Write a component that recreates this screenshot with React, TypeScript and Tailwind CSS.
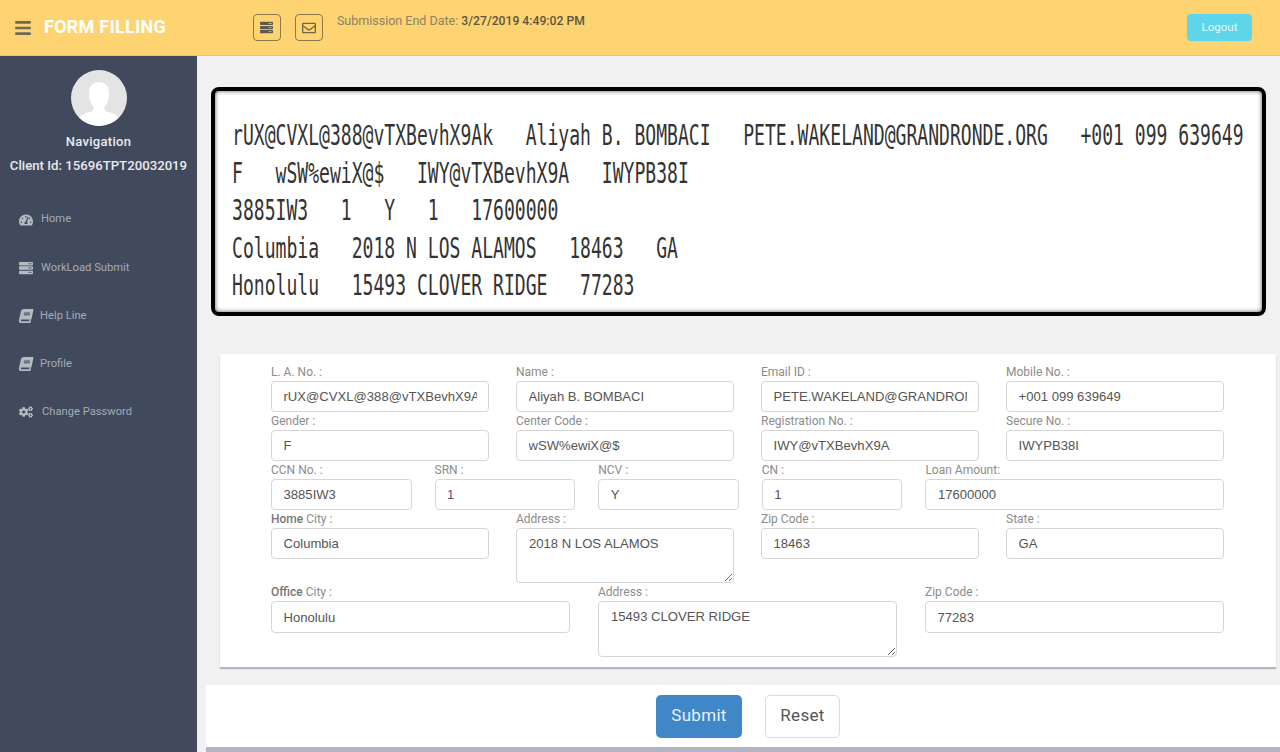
import type { ReactNode } from "react";
import { FaBars, FaBook, FaCogs, FaRegEnvelope, FaServer, FaTachometerAlt } from "react-icons/fa";

const nav = [
  { label: "Home", icon: <FaTachometerAlt />, gap: "gap-2", cls: "h-[49px]" },
  { label: "WorkLoad Submit", icon: <FaServer />, gap: "gap-2", cls: "h-[48px]" },
  { label: "Help Line", icon: <FaBook className="-skew-x-12" />, gap: "gap-[7px]", cls: "h-[48px]" },
  { label: "Profile", icon: <FaBook className="-skew-x-12" />, gap: "gap-[7px]", cls: "h-[48px]" },
  { label: "Change Password", icon: <FaCogs />, gap: "gap-[9px]", cls: "h-[48px]" },
];

const captcha = [
  "rUX@CVXL@388@vTXBevhX9Ak   Aliyah B. BOMBACI   PETE.WAKELAND@GRANDRONDE.ORG   +001 099 639649",
  "F   wSW%ewiX@$   IWY@vTXBevhX9A   IWYPB38I",
  "3885IW3   1   Y   1   17600000",
  "Columbia   2018 N LOS ALAMOS   18463   GA",
  "Honolulu   15493 CLOVER RIDGE   77283",
];

function Label({ children }: { children: ReactNode }) {
  return <label className="block h-[18px] text-[12px] leading-[18px] text-[#8c8c8c] whitespace-nowrap">{children}</label>;
}

function Field({ label, value, className = "", h = "h-[31px]" }: { label: ReactNode; value: string; className?: string; h?: string }) {
  return (
    <div className={className}>
      <Label>{label}</Label>
      <input
        readOnly
        value={value}
        className={`block w-full ${h} rounded-[4px] border border-[#d6d6d6] bg-white px-[11.5px] font-["Liberation_Sans",sans-serif] text-[13.1px] text-[#555] outline-none`}
      />
    </div>
  );
}

function Area({ label, value, h, className = "" }: { label: ReactNode; value: string; h: string; className?: string }) {
  return (
    <div className={className}>
      <Label>{label}</Label>
      <textarea
        readOnly
        value={value}
        className={`block w-full ${h} rounded-[4px] border border-[#d6d6d6] bg-white px-3 py-[7px] font-["Liberation_Sans",sans-serif] text-[13.1px] leading-[16px] text-[#555] outline-none`}
      />
    </div>
  );
}

export default function App() {
  return (
    <div className={`flex h-[752px] w-[1280px] flex-col overflow-hidden bg-[#f1f1f1] font-["Roboto",sans-serif]`}>
      <header className="flex h-[56px] shrink-0 items-start border-b border-[#e6c57f] bg-[#fed472]">
        <FaBars className="ml-[14px] mt-[19px] text-[18px] text-[#6f6a58]" />
        <span className="ml-[12px] mt-[15px] text-[18px] font-bold leading-[24px] tracking-[0.25px] text-white">FORM FILLING</span>
        <button className="ml-[87px] mt-[14px] flex h-[27px] w-[28px] items-center justify-center rounded-[4px] border border-[#8b7a48] text-[13px] text-[#5d5a4c]">
          <FaServer />
        </button>
        <button className="ml-[14px] mt-[14px] flex h-[27px] w-[28px] items-center justify-center rounded-[4px] border border-[#8b7a48] text-[14px] text-[#6d6649]">
          <FaRegEnvelope />
        </button>
        <p className="ml-[14px] mt-[13px] text-[12.5px] leading-[16px] text-[#8b8165]">
          Submission End Date: <span className="text-[12.2px] font-medium text-[#5c5543]">3/27/2019 4:49:02 PM</span>
        </p>
        <button className="ml-auto mr-[28px] mt-[14px] h-[27px] w-[65px] rounded-[4px] bg-[#5ed6ea] text-[11.5px] text-[#e6f8fb]">Logout</button>
      </header>

      <div className="flex min-h-0 flex-1">
        <aside className="flex w-[197px] shrink-0 flex-col items-center bg-[#414a5c] pt-[14px]">
          <svg viewBox="0 0 56 56" className="h-[56px] w-[56px] rounded-full bg-[#e4e4e4]">
            <path d="M5 56c1-10 6-12 14-14 4-1 4-4 3-6-3-3-4-8-4-13 0-7 4-11 10-11s10 4 10 11c0 5-1 10-4 13-1 2-1 5 3 6 8 2 13 4 14 14z" fill="#fff" />
          </svg>
          <p className="mt-[8px] text-[13px] font-medium leading-[16px] tracking-[0.3px] text-[#e8eaee]">Navigation</p>
          <p className="mt-[8px] whitespace-nowrap text-[13.2px] font-medium leading-[16px] text-[#e8eaee]">Client Id: 15696TPT20032019</p>
          <nav className="mt-[21px] w-full">
            {nav.map((item) => (
              <a key={item.label} className={`flex ${item.cls} items-center ${item.gap} pl-[18px] text-[11.2px] text-[#a4abb7]`}>
                <span className="flex w-[15px] justify-center text-[14px] text-[#b4b9c2]">{item.icon}</span>
                {item.label}
              </a>
            ))}
          </nav>
        </aside>

        <main className="min-w-0 flex-1">
          <section className="ml-[14px] mr-[14px] mt-[31px] h-[229px] overflow-hidden rounded-[8px] border-[4px] border-black bg-white pl-[17px] pt-[26px] shadow-[inset_0_0_4px_#555] font-['DejaVu_Sans_Mono',monospace] text-[#333]">
            {captcha.map((line) => (
              <div key={line} className="h-[37.5px] origin-left scale-x-[0.623] whitespace-pre text-[29px] leading-[37.5px]">
                {line}
              </div>
            ))}
          </section>

          <section className="ml-[23px] mr-[4px] mt-[38px] h-[313px] bg-white pl-[51px] pr-[52px] pt-[9px] shadow-[0_2px_1px_#b2b4c4]">
            <div className="grid grid-cols-4 gap-x-[27px]">
              <Field label="L. A. No. :" value="rUX@CVXL@388@vTXBevhX9Ak" />
              <Field label="Name :" value="Aliyah B. BOMBACI" />
              <Field label="Email ID :" value="PETE.WAKELAND@GRANDRONDE.ORG" />
              <Field label="Mobile No. :" value="+001 099 639649" />
              <Field label="Gender :" value="F" />
              <Field label="Center Code :" value="wSW%ewiX@$" />
              <Field label="Registration No. :" value="IWY@vTXBevhX9A" />
              <Field label="Secure No. :" value="IWYPB38I" />
            </div>
            <div className="flex gap-x-[23px]">
              <Field className="w-[140.6px]" label="CCN No. :" value="3885IW3" />
              <Field className="w-[140.6px]" label="SRN :" value="1" />
              <Field className="w-[140.6px]" label="NCV :" value="Y" />
              <Field className="w-[140.6px]" label="CN :" value="1" />
              <Field className="flex-1" label="Loan Amount:" value="17600000" />
            </div>
            <div className="grid grid-cols-4 gap-x-[27px]">
              <Field label={<><b className="font-medium text-[#777]">Home</b> City :</>} value="Columbia" />
              <Area label="Address :" value="2018 N LOS ALAMOS" h="h-[55px]" />
              <Field label="Zip Code :" value="18463" />
              <Field label="State :" value="GA" />
            </div>
            <div className="grid grid-cols-3 gap-x-[28px]">
              <Field h="h-[32px]" label={<><b className="font-medium text-[#777]">Office</b> City :</>} value="Honolulu" />
              <Area label="Address :" value="15493 CLOVER RIDGE" h="h-[56px]" />
              <Field h="h-[32px]" label="Zip Code :" value="77283" />
            </div>
          </section>

          <div className="ml-[9px] mt-[18px] flex h-[67px] items-start justify-center gap-[23px] border-b-[5px] border-[#b2b4c4] bg-white pl-[10px] pt-[10px]">
            <button className="h-[43px] w-[86px] rounded-[5px] bg-[#3f87c6] pb-[2px] text-[17px] tracking-[0.3px] text-[#eaf3fa]">Submit</button>
            <button className="h-[43px] w-[75px] rounded-[5px] border border-[#dcdcdc] bg-white pb-[2px] text-[17px] tracking-[0.3px] text-[#555]">Reset</button>
          </div>
        </main>
      </div>
    </div>
  );
}
